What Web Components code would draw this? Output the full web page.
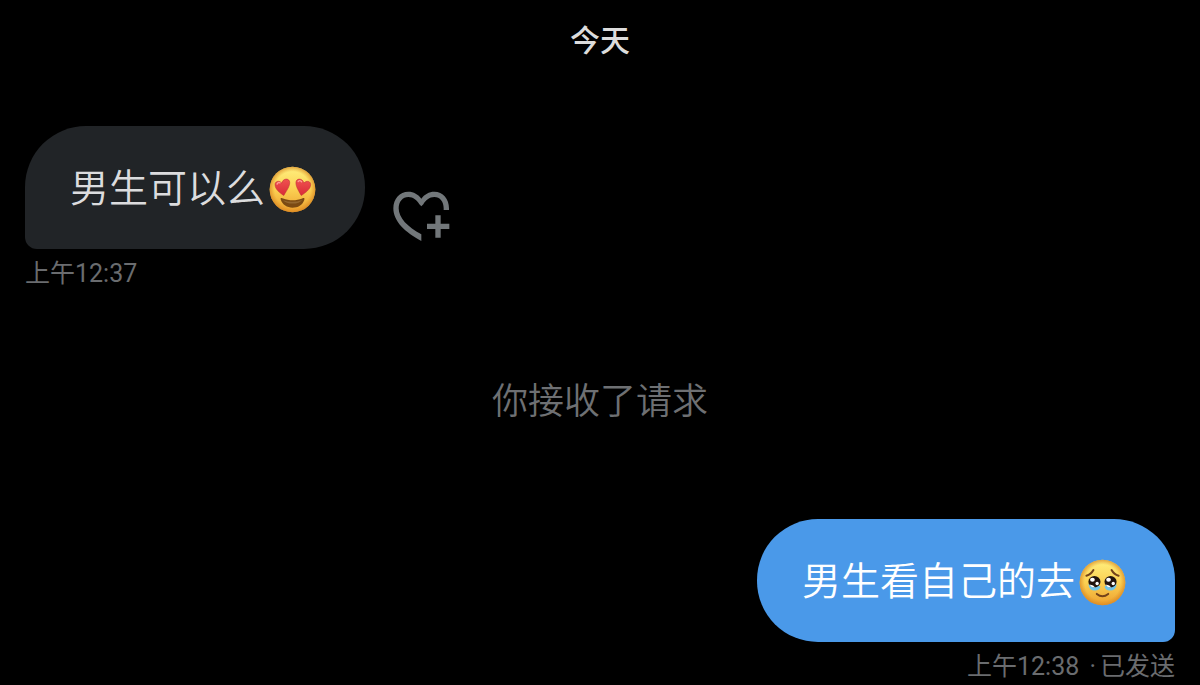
<!DOCTYPE html>
<html lang="zh-CN">
<head>
<meta charset="utf-8">
<meta name="viewport" content="width=device-width, initial-scale=1">
<title>私信</title>
<style>
    body {
        margin: 0;
        background: #000;
        font-family: Roboto, "Noto Sans CJK SC", sans-serif;
    }
    .dot {
        padding: 0 4px;
    }
</style>
</head>
<body>
<chat-thread>
    <chat-day>今天</chat-day>
    <chat-message side="in">
        男生可以么<chat-emoji name="love"></chat-emoji>
        <chat-react slot="action"></chat-react>
        <time slot="meta" datetime="00:37">上午12:37</time>
    </chat-message>
    <chat-notice>你接收了请求</chat-notice>
    <chat-message side="out">
        男生看自己的去<chat-emoji name="touched"></chat-emoji>
        <span slot="meta"><time datetime="00:38">上午12:38</time> <span class="dot">·</span>已发送</span>
    </chat-message>
</chat-thread>

<script>
class ChatThread extends HTMLElement {
    constructor() {
        super();
        this.attachShadow({mode: 'open'}).innerHTML = `
        <style>
            :host {
                display: flex;
                flex-direction: column;
                padding: 20px 25px 0;
            }
        </style>
        <slot></slot>`;
    }
}

class ChatDay extends HTMLElement {
    constructor() {
        super();
        this.attachShadow({mode: 'open'}).innerHTML = `
        <style>
            :host {
                display: block;
                margin-bottom: 64px;
                color: #dcdcdc;
                font-size: 30px;
                font-weight: 500;
                line-height: 42px;
                text-align: center;
            }
        </style>
        <slot></slot>`;
    }
}

class ChatNotice extends HTMLElement {
    constructor() {
        super();
        this.attachShadow({mode: 'open'}).innerHTML = `
        <style>
            :host {
                display: block;
                margin: 86px 0 92px;
                color: #6e7073;
                font-size: 36px;
                font-weight: 350;
                line-height: 50px;
                text-align: center;
            }
        </style>
        <slot></slot>`;
    }
}

class ChatMessage extends HTMLElement {
    constructor() {
        super();
        this.attachShadow({mode: 'open'}).innerHTML = `
        <style>
            :host {
                display: flex;
                flex-direction: column;
                align-items: flex-start;
            }
            :host([side="out"]) {
                align-items: flex-end;
            }
            .row {
                display: flex;
                align-items: flex-end;
                gap: 28px;
            }
            .bubble {
                display: flex;
                align-items: center;
                padding: 33px 49px 30px 45px;
                border-radius: 61px 61px 61px 12px;
                background: #212427;
                color: #dcdcde;
                font-size: 39px;
                font-weight: 350;
                line-height: 60px;
            }
            :host([side="out"]) .bubble {
                border-radius: 61px 61px 12px 61px;
                background: #4a99e9;
                color: #fff;
            }
            .meta {
                margin-top: 7px;
                color: #6a6c6f;
                font-size: 25px;
                line-height: 35px;
            }
        </style>
        <div class="row">
            <div class="bubble"><slot></slot></div>
            <slot name="action"></slot>
        </div>
        <div class="meta"><slot name="meta"></slot></div>`;
    }
}

class ChatReact extends HTMLElement {
    constructor() {
        super();
        this.attachShadow({mode: 'open'}).innerHTML = `
        <style>
            :host {
                display: block;
                padding-bottom: 7px;
            }
            button {
                display: block;
                padding: 0;
                border: 0;
                background: none;
                color: #72777a;
                cursor: pointer;
            }
            svg {
                display: block;
                width: 57px;
                height: 51px;
            }
        </style>
        <button type="button" aria-label="添加回应">
            <svg viewBox="24 34 171 153" fill="currentColor" aria-hidden="true">
                <path d="M192 91H176V86C176 66 165 52 148 52C133 52 122 62 115 74L109 80L103 74C96 62 85 52 70 52C53 52 41 66 41 86C41 115 68 142 109 164V184C60 158 25 125 25 86C25 57 44 36 70 36C86 36 100 44 109 57C118 44 132 36 148 36C174 36 192 57 192 86Z"/>
                <path d="M151 107h16v25h26v16h-26v26h-16v-26h-25v-16h25z"/>
            </svg>
        </button>`;
    }
}

const FACES = {
    love: {
        label: '花痴',
        art: `
            <g fill="url(#heart)" stroke="#b92a32" stroke-width="1.5">
                <path d="M72 118C60 110 46 99 46 86C45 76 58 71 66 81C69 68 84 65 89 75C93 87 80 104 72 118Z"/>
                <path d="M124 118C136 110 152 99 152 86C153 76 140 71 132 81C129 68 114 65 109 75C105 87 116 104 124 118Z"/>
            </g>
            <path d="M52 84Q55 77 61 80M115 76Q120 71 125 77" fill="none" stroke="#ff9c96" stroke-width="4" stroke-linecap="round"/>
            <path d="M63 130C61 125 65 124 70 127C88 134 109 134 127 127C132 124 135 126 133 131C128 147 114 154 98 154C82 154 68 146 63 130Z" fill="#7b4a13"/>
            <path d="M70 132Q98 142 127 131Q119 142 98 142Q79 142 70 132Z" fill="#94672f"/>`
    },
    touched: {
        label: '感动',
        art: `
            <g fill="none" stroke="#74431a" stroke-width="6" stroke-linecap="round">
                <path d="M50 80Q64 76 71 63"/>
                <path d="M146 80Q132 76 125 63"/>
                <path d="M81 134Q98 148 115 134"/>
            </g>
            <g fill="#6fc4e8">
                <path d="M56 105Q58 124 75 124Q90 124 92 111Z"/>
                <path d="M140 105Q138 124 121 124Q106 124 104 111Z"/>
            </g>
            <g fill="#21140e">
                <ellipse cx="74" cy="98" rx="18" ry="17"/>
                <ellipse cx="122" cy="98" rx="18" ry="17"/>
            </g>
            <g fill="#fff">
                <ellipse cx="68" cy="92" rx="7" ry="6"/>
                <ellipse cx="116" cy="92" rx="7" ry="6"/>
                <circle cx="82" cy="103" r="5"/>
                <circle cx="130" cy="103" r="5"/>
                <path d="M59 107Q70 105 76 115Q64 116 59 107Z"/>
                <path d="M107 107Q118 105 124 115Q112 116 107 107Z"/>
            </g>`
    }
};

class ChatEmoji extends HTMLElement {
    constructor() {
        super();
        this.attachShadow({mode: 'open'});
    }

    connectedCallback() {
        const face = FACES[this.getAttribute('name')];
        this.shadowRoot.innerHTML = `
        <style>
            :host {
                display: block;
                margin-left: 4px;
            }
            svg {
                display: block;
                width: 47px;
                height: 47px;
            }
        </style>
        <svg viewBox="28 30 140 140" role="img" aria-label="${face.label}">
            <defs>
                <linearGradient id="skin" x1="0" y1="0" x2="0" y2="1">
                    <stop offset="0" stop-color="#fff07f"/>
                    <stop offset=".5" stop-color="#fbd052"/>
                    <stop offset="1" stop-color="#eda12f"/>
                </linearGradient>
                <radialGradient id="rim">
                    <stop offset=".78" stop-color="#df8b20" stop-opacity="0"/>
                    <stop offset="1" stop-color="#d68220" stop-opacity=".7"/>
                </radialGradient>
                <linearGradient id="heart" x1="0" y1="0" x2="0" y2="1">
                    <stop offset="0" stop-color="#f0524f"/>
                    <stop offset="1" stop-color="#d82b38"/>
                </linearGradient>
            </defs>
            <circle cx="98" cy="100" r="68" fill="url(#skin)"/>
            <circle cx="98" cy="100" r="68" fill="url(#rim)"/>
            ${face.art}
        </svg>`;
    }
}

customElements.define('chat-thread', ChatThread);
customElements.define('chat-day', ChatDay);
customElements.define('chat-notice', ChatNotice);
customElements.define('chat-message', ChatMessage);
customElements.define('chat-react', ChatReact);
customElements.define('chat-emoji', ChatEmoji);
</script>
</body>
</html>
